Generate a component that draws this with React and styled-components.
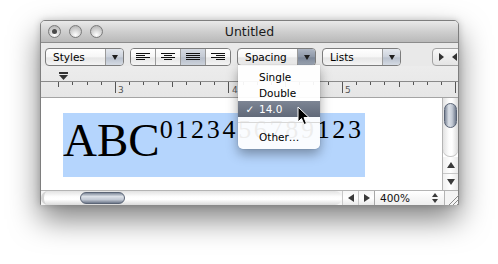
import React from "react";
import styled, { createGlobalStyle } from "styled-components";

const Global = createGlobalStyle`
  html, body {
    margin: 0;
    background: #fff;
    font-family: "DejaVu Sans", "Liberation Sans", sans-serif;
  }
`;

const Stage = styled.div`
  width: 498px;
  height: 264px;
  padding: 20px 0 0 40px;
  box-sizing: border-box;
  overflow: hidden;
`;

const Window = styled.div`
  position: relative;
  width: 419px;
  height: 185px;
  box-sizing: border-box;
  display: flex;
  flex-direction: column;
  border: 1px solid #7e7e7e;
  border-radius: 5px 5px 0 0;
  background: #e9e9e9;
  box-shadow: 0 14px 30px rgba(0, 0, 0, 0.5), 0 0 7px rgba(0, 0, 0, 0.18);
`;

const TitleBar = styled.div`
  height: 21px;
  flex: none;
  display: flex;
  align-items: center;
  position: relative;
  border-bottom: 1px solid #8c8c8c;
  border-radius: 4px 4px 0 0;
  background: linear-gradient(#e9e9e9, #cfcfcf 50%, #b9b9b9);
`;

const Lights = styled.div`
  display: flex;
  gap: 8px;
  padding-left: 7px;
`;

const Light = styled.span`
  width: 13px;
  height: 13px;
  box-sizing: border-box;
  border-radius: 50%;
  border: 1px solid #7a7a7a;
  background: radial-gradient(circle at 50% 80%, #ffffff 0%, #dcdcdc 40%, #a9a9a9 100%);
  display: flex;
  align-items: center;
  justify-content: center;
  &::after {
    content: "";
    width: 5px;
    height: 5px;
    border-radius: 50%;
    background: ${(p) => (p.dot ? "#4a4a4a" : "transparent")};
  }
`;

const Title = styled.div`
  position: absolute;
  left: 0;
  right: 0;
  text-align: center;
  font-size: 12.5px;
  color: #1a1a1a;
  pointer-events: none;
`;

const Toolbar = styled.div`
  height: 23px;
  flex: none;
  box-sizing: border-box;
  padding: 5px 0 0 4px;
  display: flex;
  gap: 6px;
  overflow: hidden;
  background: #e9e9e9;
`;

const Popup = styled.div`
  flex: none;
  width: 79px;
  height: 18px;
  box-sizing: border-box;
  display: flex;
  border: 1px solid #7c7c7c;
  border-radius: 4px;
  overflow: hidden;
  background: linear-gradient(#ffffff, #f6f6f6 50%, #e6e6e6 55%, #f4f4f4);
  font-size: 10.5px;
  color: #000;
`;

const PopupLabel = styled.span`
  flex: 1;
  padding-left: 7px;
  line-height: 16px;
`;

const PopupArrow = styled.span`
  width: 17px;
  border-left: 1px solid #9a9a9a;
  display: flex;
  align-items: center;
  justify-content: center;
  background: ${(p) =>
    p.pressed
      ? "linear-gradient(#aeb6c3, #8e98a8 50%, #7c8798 55%, #a0a9b8)"
      : "linear-gradient(#e4e8ee, #ccd2dc 50%, #b9c1cd 55%, #d5dbe4)"};
  &::after {
    content: "";
    border-left: 3.5px solid transparent;
    border-right: 3.5px solid transparent;
    border-top: 5px solid #1e1e1e;
    margin-top: 1px;
  }
`;

const Segmented = styled.div`
  flex: none;
  width: 101px;
  height: 18px;
  box-sizing: border-box;
  display: flex;
  border: 1px solid #7c7c7c;
  border-radius: 4px;
  overflow: hidden;
`;

const Segment = styled.span`
  flex: 1;
  display: flex;
  align-items: center;
  justify-content: center;
  & + & {
    border-left: 1px solid #9a9a9a;
  }
  background: ${(p) =>
    p.on
      ? "linear-gradient(#d4d9e1, #c4cad4 50%, #b6bdc9 55%, #cdd3dc)"
      : "linear-gradient(#ffffff, #f6f6f6 50%, #e6e6e6 55%, #f4f4f4)"};
`;

const Stepper = styled.div`
  flex: none;
  width: 40px;
  height: 18px;
  margin-left: 25px;
  box-sizing: border-box;
  display: flex;
  align-items: center;
  gap: 8px;
  padding-left: 6px;
  border: 1px solid #a2a2a2;
  border-radius: 4px;
  background: linear-gradient(#f8f8f8, #e4e4e4);
`;

const Tri = styled.span`
  width: 0;
  height: 0;
  border-top: 4px solid transparent;
  border-bottom: 4px solid transparent;
  ${(p) => (p.dir === "left" ? "border-right: 5px solid #333;" : "border-left: 5px solid #333;")}
`;

const Ruler = styled.div`
  height: 31px;
  flex: none;
  border-bottom: 1px solid #a4a4a4;
  background: linear-gradient(#ececec, #e6e6e6);
`;

const Body = styled.div`
  height: 92px;
  flex: none;
  display: flex;
`;

const TextArea = styled.div`
  flex: 1;
  background: #fff;
  padding: 15px 0 0 22px;
  overflow: hidden;
`;

const Selection = styled.div`
  width: 302px;
  height: 64px;
  background: #b5d5fd;
  overflow: hidden;
  white-space: nowrap;
  font-family: "Liberation Serif", "Times New Roman", serif;
  font-size: 47px;
  line-height: 55px;
  color: #000;
`;

const Sup = styled.span`
  font-size: 26px;
  line-height: 1;
  letter-spacing: 2.7px;
  vertical-align: 18px;
`;

const VScroll = styled.div`
  width: 15px;
  flex: none;
  display: flex;
  flex-direction: column;
  border-left: 1px solid #b4b4b4;
  background: #fff;
`;

const VTrack = styled.div`
  flex: 1;
  padding: 5px 1px 0 1px;
  border-radius: 0 0 7px 7px;
  background: linear-gradient(90deg, #e2e2e2, #fdfdfd 40%, #ffffff 60%, #dcdcdc);
  box-shadow: inset 0 -1px 0 #c4c4c4;
`;

const VThumb = styled.div`
  height: 25px;
  border: 1px solid #5b6576;
  border-radius: 7px;
  box-sizing: border-box;
  background: linear-gradient(90deg, #7e8899, #dce1e8 35%, #c3cad5 65%, #6f798b);
`;

const ArrowBtn = styled.div`
  height: 16px;
  flex: none;
  display: flex;
  align-items: center;
  justify-content: center;
  background: linear-gradient(90deg, #f0f0f0, #ffffff 50%, #eaeaea);
  & + & {
    border-top: 1px solid #c8c8c8;
  }
`;

const Arrow = styled.span`
  width: 0;
  height: 0;
  ${(p) => {
    if (p.dir === "up")
      return "border-left: 4px solid transparent; border-right: 4px solid transparent; border-bottom: 6px solid #3a3a3a;";
    if (p.dir === "down")
      return "border-left: 4px solid transparent; border-right: 4px solid transparent; border-top: 6px solid #3a3a3a;";
    if (p.dir === "left")
      return "border-top: 4px solid transparent; border-bottom: 4px solid transparent; border-right: 6px solid #3a3a3a;";
    return "border-top: 4px solid transparent; border-bottom: 4px solid transparent; border-left: 6px solid #3a3a3a;";
  }}
`;

const SpinArrow = styled.span`
  width: 0;
  height: 0;
  border-left: 3px solid transparent;
  border-right: 3px solid transparent;
  ${(p) => (p.dir === "up" ? "border-bottom: 4px solid #3a3a3a;" : "border-top: 4px solid #3a3a3a;")}
`;

const HBar = styled.div`
  height: 14px;
  flex: none;
  display: flex;
  border-top: 1px solid #b4b4b4;
  background: #f4f4f4;
`;

const HTrack = styled.div`
  width: 301px;
  flex: none;
  box-sizing: border-box;
  padding: 1px 0 0 36px;
  border-radius: 7px;
  border-left: 3px solid #d4d4d4;
  background: linear-gradient(#e2e2e2, #fdfdfd 40%, #ffffff 60%, #dadada);
`;

const HThumb = styled.div`
  width: 45px;
  height: 12px;
  box-sizing: border-box;
  border: 1px solid #5b6576;
  border-radius: 7px;
  background: linear-gradient(#7e8899, #dce1e8 35%, #c3cad5 65%, #6f798b);
`;

const HArrow = styled.div`
  width: 15px;
  flex: none;
  display: flex;
  align-items: center;
  justify-content: center;
  border-left: 1px solid #c8c8c8;
  background: linear-gradient(#f6f6f6, #ffffff 50%, #e8e8e8);
`;

const ZoomBox = styled.div`
  width: 70px;
  flex: none;
  display: flex;
  align-items: center;
  justify-content: space-between;
  box-sizing: border-box;
  padding: 0 6px 0 5px;
  border-left: 1px solid #a8a8a8;
  font-size: 10.5px;
  color: #111;
  background: linear-gradient(#ffffff, #eeeeee);
`;

const Spin = styled.span`
  display: flex;
  flex-direction: column;
  gap: 2px;
`;

const Grip = styled.div`
  width: 15px;
  flex: none;
  border-left: 1px solid #b4b4b4;
  display: flex;
  align-items: flex-end;
  justify-content: flex-end;
`;

const Menu = styled.div`
  position: absolute;
  left: 197px;
  top: 44px;
  width: 82px;
  padding: 4px 0;
  box-sizing: border-box;
  border-radius: 0 0 5px 5px;
  background: rgba(255, 255, 255, 0.93);
  box-shadow: 0 5px 12px rgba(0, 0, 0, 0.35), 0 0 1px rgba(0, 0, 0, 0.4);
  font-size: 10.5px;
`;

const Item = styled.div`
  height: 16px;
  line-height: 16px;
  display: flex;
  color: ${(p) => (p.active ? "#fff" : "#000")};
  background: ${(p) => (p.active ? "linear-gradient(#7d8594, #606979)" : "transparent")};
`;

const Check = styled.span`
  width: 21px;
  flex: none;
  text-align: center;
  padding-left: 3px;
  box-sizing: border-box;
`;

const Sep = styled.div`
  height: 1px;
  margin: 5px 0 6px;
  background: #d8d8d8;
`;

const Cursor = styled.svg`
  position: absolute;
  left: 256px;
  top: 85px;
`;

function AlignIcon({ kind }) {
  const rows = [0, 1, 2, 3];
  return (
    <svg width="14" height="8" viewBox="0 0 14 8">
      {rows.map((r) => {
        const short = r % 2 === 1;
        let x1 = 0;
        let x2 = 14;
        if (short && kind === "left") x2 = 9;
        if (short && kind === "center") { x1 = 3; x2 = 11; }
        if (short && kind === "right") x1 = 5;
        return <rect key={r} x={x1} y={r * 2} width={x2 - x1} height="1" fill="#111" />;
      })}
    </svg>
  );
}

function RulerMarks() {
  const ticks = [];
  const inch = 113.4;
  const start = 74 - inch * 0.5;
  for (let i = 0; i < 40; i++) {
    const x = Math.round(start + (i * inch) / 8) + 0.5;
    if (x > 417) break;
    const mod = i % 8;
    let len = 3;
    if (mod === 4) len = 11;
    else if (mod === 0) len = 5;
    ticks.push(<line key={i} x1={x} y1="16" x2={x} y2={16 + len} stroke="#555" strokeWidth="1" />);
  }
  return (
    <svg width="417" height="31" viewBox="0 0 417 31">
      <line x1="0" y1="15.5" x2="417" y2="15.5" stroke="#8a8a8a" />
      {ticks}
      <rect x="18" y="6" width="9" height="2" fill="#333" />
      <path d="M18 9 H27 L22.5 14 Z" fill="#333" />
      <text x="77" y="27" fontSize="9" fill="#555" fontFamily="DejaVu Sans, sans-serif">3</text>
      <text x="191" y="27" fontSize="9" fill="#555" fontFamily="DejaVu Sans, sans-serif">4</text>
      <text x="304" y="27" fontSize="9" fill="#555" fontFamily="DejaVu Sans, sans-serif">5</text>
    </svg>
  );
}

export default function App() {
  return (
    <>
      <Global />
      <Stage>
        <Window>
          <TitleBar>
            <Lights>
              <Light dot />
              <Light />
              <Light />
            </Lights>
            <Title>Untitled</Title>
          </TitleBar>
          <Toolbar>
            <Popup>
              <PopupLabel>Styles</PopupLabel>
              <PopupArrow />
            </Popup>
            <Segmented>
              <Segment><AlignIcon kind="left" /></Segment>
              <Segment><AlignIcon kind="center" /></Segment>
              <Segment on><AlignIcon kind="justify" /></Segment>
              <Segment><AlignIcon kind="right" /></Segment>
            </Segmented>
            <Popup>
              <PopupLabel>Spacing</PopupLabel>
              <PopupArrow pressed />
            </Popup>
            <Popup>
              <PopupLabel>Lists</PopupLabel>
              <PopupArrow />
            </Popup>
            <Stepper>
              <Tri dir="right" />
              <Tri dir="left" />
            </Stepper>
          </Toolbar>
          <Ruler>
            <RulerMarks />
          </Ruler>
          <Body>
            <TextArea>
              <Selection>
                ABC<Sup>0123456789123</Sup>
              </Selection>
            </TextArea>
            <VScroll>
              <VTrack>
                <VThumb />
              </VTrack>
              <ArrowBtn><Arrow dir="up" /></ArrowBtn>
              <ArrowBtn><Arrow dir="down" /></ArrowBtn>
            </VScroll>
          </Body>
          <HBar>
            <HTrack>
              <HThumb />
            </HTrack>
            <HArrow><Arrow dir="left" /></HArrow>
            <HArrow><Arrow dir="right" /></HArrow>
            <ZoomBox>
              <span>400%</span>
              <Spin>
                <SpinArrow dir="up" />
                <SpinArrow dir="down" />
              </Spin>
            </ZoomBox>
            <Grip>
              <svg width="14" height="13" viewBox="0 0 14 13">
                <path d="M13 3 L3 13 M13 7 L7 13 M13 11 L11 13" stroke="#8a8a8a" strokeWidth="1" />
              </svg>
            </Grip>
          </HBar>
          <Menu>
            <Item><Check />Single</Item>
            <Item><Check />Double</Item>
            <Item active><Check>✓</Check>14.0</Item>
            <Sep />
            <Item><Check />Other…</Item>
          </Menu>
          <Cursor width="13" height="20" viewBox="0 0 13 20">
            <path d="M1 1 L1 16 L4.5 12.5 L7 18.5 L9.5 17.5 L7 11.5 L12 11.5 Z" fill="#000" stroke="#fff" strokeWidth="1" />
          </Cursor>
        </Window>
      </Stage>
    </>
  );
}
